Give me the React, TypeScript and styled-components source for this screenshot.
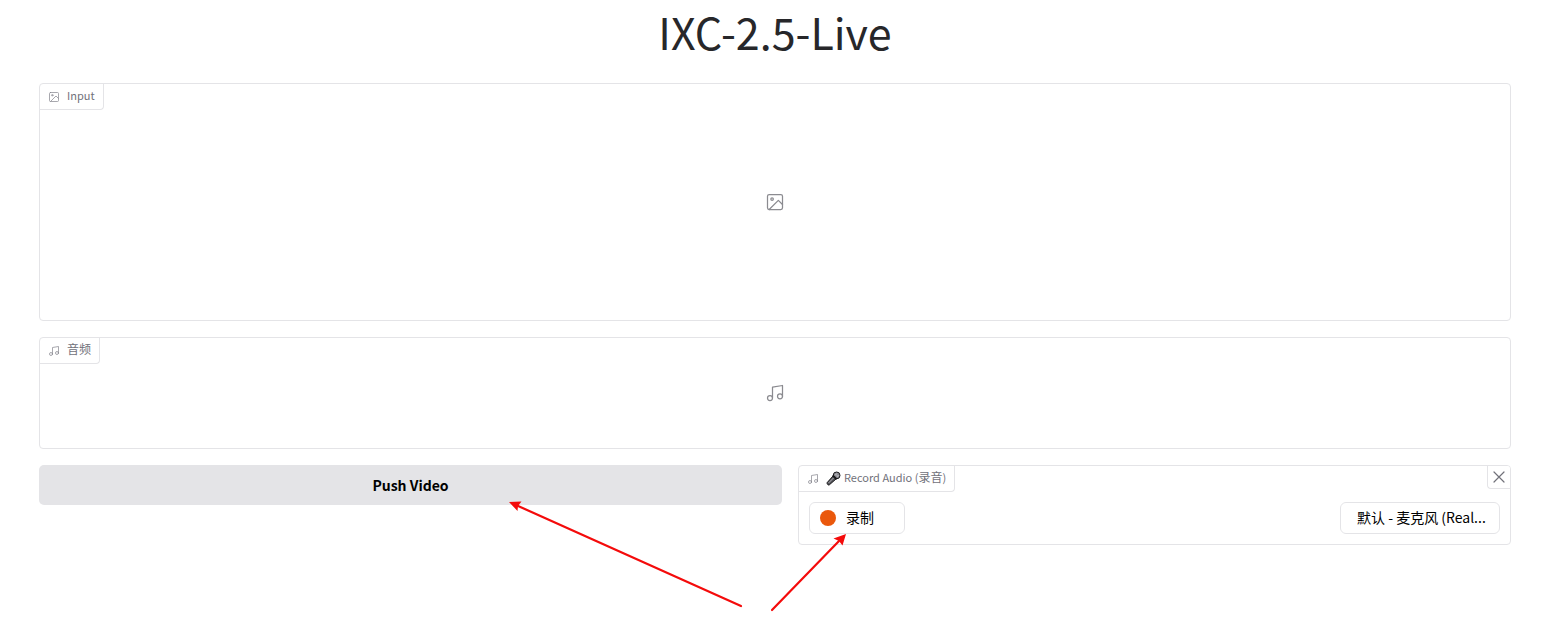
import React from "react";
import styled, { createGlobalStyle } from "styled-components";

const GlobalStyle = createGlobalStyle`
  *, *::before, *::after { box-sizing: border-box; }
  body {
    margin: 0;
    background: #ffffff;
    color: #27272a;
    font-family: "Noto Sans CJK SC", "Noto Sans", sans-serif;
  }
`;

const Page = styled.main`
  display: flex;
  flex-direction: column;
  gap: 16px;
  padding: 0 30px 80px 39px;
`;

const Title = styled.h1`
  margin: 0;
  height: 67px;
  font-size: 43px;
  line-height: 62px;
  font-weight: 400;
  text-align: center;
  color: #27272a;
`;

const Block = styled.section<{ $height: number }>`
  position: relative;
  display: flex;
  flex-direction: column;
  min-height: ${(p) => p.$height}px;
  border: 1px solid #e4e4e7;
  border-radius: 4px;
  overflow: hidden;
`;

const BlockLabel = styled.div`
  display: flex;
  align-items: flex-start;
  align-self: flex-start;
  height: 26px;
  padding: 0 8px;
  border: solid #e4e4e7;
  border-width: 0 1px 1px 0;
  border-bottom-right-radius: 4px;
  color: #71717a;
  font-size: 11px;
  line-height: 22px;
  white-space: nowrap;
`;

const LabelIcon = styled.span`
  display: flex;
  align-self: center;
  margin-right: 7px;
  color: #8b8b93;
`;

const Han = styled.span`
  font-size: 12px;
`;

const Empty = styled.div`
  flex: 1;
  display: flex;
  align-items: center;
  justify-content: center;
  padding-bottom: 26px;
  color: #8b8b90;
`;

const Row = styled.div`
  position: relative;
  display: grid;
  grid-template-columns: 743fr 713fr;
  gap: 16px;
  align-items: start;
`;

const PushButton = styled.button`
  height: 40px;
  padding: 0 16px;
  border: 0;
  border-radius: 5px;
  background: #e4e4e7;
  color: #000000;
  font: 700 14px/40px "Noto Sans CJK SC", sans-serif;
  cursor: pointer;
`;

const CloseButton = styled.button`
  position: absolute;
  top: 0;
  right: 0;
  display: flex;
  align-items: center;
  justify-content: center;
  width: 23px;
  height: 23px;
  padding: 0;
  border: solid #e4e4e7;
  border-width: 0 0 1px 1px;
  border-bottom-left-radius: 4px;
  background: #ffffff;
  color: #71717a;
  cursor: pointer;
`;

const Controls = styled.div`
  display: flex;
  justify-content: space-between;
  padding: 10px;
`;

const RecordButton = styled.button`
  display: flex;
  align-items: center;
  gap: 10px;
  width: 96px;
  height: 32px;
  padding: 0 10px;
  border: 1px solid #e4e4e7;
  border-radius: 6px;
  background: #ffffff;
  color: #000000;
  font: 400 14px/28px "Noto Sans CJK SC", sans-serif;
  cursor: pointer;

  &::before {
    content: "";
    width: 16px;
    height: 16px;
    border-radius: 50%;
    background: #ea580c;
  }
`;

const RecordText = styled.span`
  padding-bottom: 2px;
`;

const DeviceSelect = styled.select`
  appearance: none;
  width: 160px;
  height: 32px;
  padding: 0 12px 2px 16px;
  border: 1px solid #e4e4e7;
  border-radius: 6px;
  background: #ffffff;
  color: #000000;
  font: 400 14px/28px "Noto Sans CJK SC", sans-serif;
`;

const Mic = styled.svg`
  align-self: center;
  margin-right: 3px;
`;

const Arrows = styled.svg`
  position: absolute;
  top: 32px;
  left: 50%;
  margin-left: -270px;
  overflow: visible;
  pointer-events: none;
`;

const ImageIcon = ({ size }: { size: number }) => (
  <svg width={size} height={size} viewBox="0 0 24 24" fill="none" stroke="currentColor" strokeWidth="1.5" strokeLinecap="round" strokeLinejoin="round">
    <rect x="3" y="3" width="18" height="18" rx="2" />
    <circle cx="8.5" cy="8.5" r="1.5" />
    <polyline points="21 15 16 10 5 21" />
  </svg>
);

const MusicIcon = ({ size }: { size: number }) => (
  <svg width={size} height={size} viewBox="0 0 24 24" fill="none" stroke="currentColor" strokeWidth="1.5" strokeLinecap="round" strokeLinejoin="round">
    <path d="M9 18V5l12-2v13" />
    <circle cx="6" cy="18" r="3" />
    <circle cx="18" cy="16" r="3" />
  </svg>
);

const Microphone = () => (
  <Mic width="15" height="15" viewBox="0 0 15 15" role="img" aria-label="microphone">
    <path d="M1.2 11.6 7 5l3 3-6.6 5.8Q2.6 14.4 1.7 13.5T1.2 11.6Z" fill="#55555a" stroke="#161618" />
    <path d="M2.5 12 8 6.500" stroke="#b0b0b6" />
    <circle cx="10.6" cy="4.4" r="3.4" fill="#88888e" stroke="#1c1c1f" />
    <path d="M6.9 4.3 10.7 8.1" stroke="#161618" strokeWidth="1.5" />
    <path d="M9.3 2.8 12.3 5.8M11.2 2.2 9 4.4M12.9 3.9 10.7 6.1" stroke="#c4c4ca" strokeWidth=".7" />
  </Mic>
);

export default function App() {
  return (
    <>
      <GlobalStyle />
      <Page>
        <Title>IXC-2.5-Live</Title>
        <Block $height={238}>
          <BlockLabel>
            <LabelIcon><ImageIcon size={12} /></LabelIcon>
            Input
          </BlockLabel>
          <Empty><ImageIcon size={20} /></Empty>
        </Block>
        <Block $height={112}>
          <BlockLabel>
            <LabelIcon><MusicIcon size={12} /></LabelIcon>
            <Han>音频</Han>
          </BlockLabel>
          <Empty><MusicIcon size={20} /></Empty>
        </Block>
        <Row>
          <PushButton type="button">Push Video</PushButton>
          <Block $height={80}>
            <BlockLabel>
              <LabelIcon><MusicIcon size={12} /></LabelIcon>
              <Microphone />
              <span>Record Audio (<Han>录音</Han>)</span>
            </BlockLabel>
            <CloseButton type="button" aria-label="Close">
              <svg width="12" height="12" viewBox="0 0 12 12" stroke="currentColor" strokeWidth="1.2" strokeLinecap="round">
                <path d="M1 1 11 11M11 1 1 11" />
              </svg>
            </CloseButton>
            <Controls>
              <RecordButton type="button"><RecordText>录制</RecordText></RecordButton>
              <DeviceSelect aria-label="Microphone">
                <option>默认 - 麦克风 (Real...</option>
              </DeviceSelect>
            </Controls>
          </Block>
          <Arrows width="346" height="118" viewBox="0 0 346 118" aria-hidden="true">
            <g stroke="#f40b0b" strokeWidth="2.2" strokeLinecap="round">
              <path d="M236 109 12 8.5" />
              <path d="M267 113 334 44" />
            </g>
            <g fill="#f40b0b">
              <path d="M4 5 16.500 4.500 13 9 12.500 14Z" />
              <path d="M341 37 337.500 48.500 334 44 328.500 41.500Z" />
            </g>
          </Arrows>
        </Row>
      </Page>
    </>
  );
}
